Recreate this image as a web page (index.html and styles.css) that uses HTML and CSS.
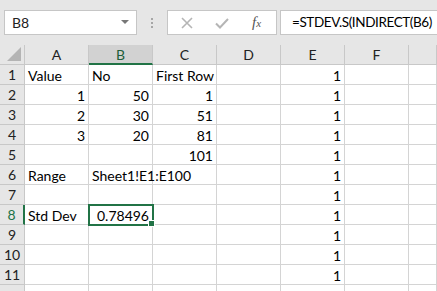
FILE: index.html
```html
<!DOCTYPE html>
<html lang="en">
<head>
    <meta charset="UTF-8">
    <title>Std Dev</title>
    <link rel="stylesheet" href="styles.css">
</head>
<body>
    <div class="toolbar">
        <div class="namebox">
            <span>B8</span>
            <span class="caret"></span>
        </div>
        <div class="grip"><i></i><i></i><i></i></div>
        <div class="buttons">
            <svg class="btn" width="14" height="14" viewBox="0 0 14 14"><path d="M2 2L12 12M12 2L2 12" stroke="#b5b5b5" stroke-width="1.6" fill="none"/></svg>
            <svg class="btn" width="16" height="14" viewBox="0 0 16 14"><path d="M2 7.5L6 11.5L14 3" stroke="#b5b5b5" stroke-width="2" fill="none"/></svg>
            <span class="fx">f<sub>x</sub></span>
        </div>
        <div class="formula">=STDEV.S(INDIRECT(B6)</div>
    </div>

    <div class="sheet">
        <div class="corner"><span class="tri"></span></div>
        <div class="colhead">A</div>
        <div class="colhead active">B</div>
        <div class="colhead">C</div>
        <div class="colhead">D</div>
        <div class="colhead">E</div>
        <div class="colhead">F</div>
        <div class="colhead last"></div>

        <div class="rowhead">1</div>
        <div class="cell">Value</div><div class="cell">No</div><div class="cell">First Row</div><div class="cell"></div><div class="cell num">1</div><div class="cell"></div><div class="cell"></div>

        <div class="rowhead">2</div>
        <div class="cell num">1</div><div class="cell num">50</div><div class="cell num">1</div><div class="cell"></div><div class="cell num">1</div><div class="cell"></div><div class="cell"></div>

        <div class="rowhead">3</div>
        <div class="cell num">2</div><div class="cell num">30</div><div class="cell num">51</div><div class="cell"></div><div class="cell num">1</div><div class="cell"></div><div class="cell"></div>

        <div class="rowhead">4</div>
        <div class="cell num">3</div><div class="cell num">20</div><div class="cell num">81</div><div class="cell"></div><div class="cell num">1</div><div class="cell"></div><div class="cell"></div>

        <div class="rowhead">5</div>
        <div class="cell"></div><div class="cell"></div><div class="cell num">101</div><div class="cell"></div><div class="cell num">1</div><div class="cell"></div><div class="cell"></div>

        <div class="rowhead">6</div>
        <div class="cell">Range</div><div class="cell spill">Sheet1!E1:E100</div><div class="cell"></div><div class="cell"></div><div class="cell num">1</div><div class="cell"></div><div class="cell"></div>

        <div class="rowhead">7</div>
        <div class="cell"></div><div class="cell"></div><div class="cell"></div><div class="cell"></div><div class="cell num">1</div><div class="cell"></div><div class="cell"></div>

        <div class="rowhead active">8</div>
        <div class="cell">Std Dev</div><div class="cell num selected">0.78496<span class="handle"></span></div><div class="cell"></div><div class="cell"></div><div class="cell num">1</div><div class="cell"></div><div class="cell"></div>

        <div class="rowhead">9</div>
        <div class="cell"></div><div class="cell"></div><div class="cell"></div><div class="cell"></div><div class="cell num">1</div><div class="cell"></div><div class="cell"></div>

        <div class="rowhead">10</div>
        <div class="cell"></div><div class="cell"></div><div class="cell"></div><div class="cell"></div><div class="cell num">1</div><div class="cell"></div><div class="cell"></div>

        <div class="rowhead">11</div>
        <div class="cell"></div><div class="cell"></div><div class="cell"></div><div class="cell"></div><div class="cell num">1</div><div class="cell"></div><div class="cell"></div>

        <div class="rowhead"></div>
        <div class="cell"></div><div class="cell"></div><div class="cell"></div><div class="cell"></div><div class="cell"></div><div class="cell"></div><div class="cell"></div>
    </div>
</body>
</html>
```

FILE: styles.css
```css
body {
    margin: 0;
    background: #e6e6e6;
    font-family: Lato, "Liberation Sans", sans-serif;
    color: #000;
    overflow: hidden;
}
.toolbar {
    display: flex;
    align-items: center;
    height: 25px;
    padding: 10px 0 10px 4px;
}
.namebox {
    box-sizing: border-box;
    width: 133px;
    height: 25px;
    background: #fff;
    border: 1px solid #c6c6c6;
    display: flex;
    align-items: center;
    justify-content: space-between;
    padding: 0 7px 0 7px;
    font-size: 14px;
    color: #222;
}
.caret {
    width: 0;
    height: 0;
    border-left: 4px solid transparent;
    border-right: 4px solid transparent;
    border-top: 4px solid #777;
    margin-bottom: 2px;
}
.grip {
    width: 30px;
    display: flex;
    flex-direction: column;
    align-items: center;
    gap: 2px;
}
.grip i {
    width: 2px;
    height: 2px;
    background: #a6a6a6;
}
.buttons {
    box-sizing: border-box;
    width: 110px;
    height: 25px;
    background: #fff;
    border: 1px solid #c6c6c6;
    display: flex;
    align-items: center;
    padding-left: 12px;
    gap: 20px;
}
.fx {
    font-family: "Liberation Serif", serif;
    font-style: italic;
    font-size: 15px;
    color: #555;
    margin-left: 2px;
}
.fx sub {
    font-size: 11px;
    vertical-align: 0;
}
.formula {
    box-sizing: border-box;
    flex: 1;
    min-width: 0;
    height: 25px;
    margin-left: 3px;
    background: #fff;
    border: 1px solid #c6c6c6;
    border-right: none;
    padding-left: 11px;
    font-size: 13.5px;
    letter-spacing: -0.4px;
    line-height: 23px;
    white-space: nowrap;
    overflow: hidden;
}
.sheet {
    display: grid;
    grid-template-columns: 25px repeat(6, 64px) 1fr;
    grid-auto-rows: 20px;
    background: #fff;
    font-size: 14px;
}
.sheet > div {
    box-sizing: border-box;
    border-right: 1px solid #d4d4d4;
    border-bottom: 1px solid #d4d4d4;
    white-space: nowrap;
}
.sheet > .corner,
.sheet > .colhead,
.sheet > .rowhead {
    background: #e6e6e6;
    border-color: #c8c8c8;
    color: #222;
}
.corner {
    position: relative;
}
.tri {
    position: absolute;
    right: 3px;
    bottom: 3px;
    width: 0;
    height: 0;
    border-left: 14px solid transparent;
    border-bottom: 14px solid #b4b4b4;
}
.colhead {
    text-align: center;
    line-height: 19px;
}
.sheet > .colhead.active {
    background: #d2d2d2;
    border-bottom: 2px solid #217346;
    color: #1e5e3a;
}
.rowhead {
    text-align: center;
    line-height: 20px;
}
.sheet > .rowhead.active {
    border-right: 2px solid #217346;
    color: #217346;
}
.cell {
    padding: 0 3px;
    line-height: 21px;
}
.num {
    text-align: right;
}
.spill {
    overflow: visible;
    position: relative;
    z-index: 1;
}
.sheet > .selected {
    position: relative;
    outline: 2px solid #217346;
    outline-offset: -1px;
    z-index: 2;
}
.handle {
    position: absolute;
    right: -3px;
    bottom: -3px;
    width: 5px;
    height: 5px;
    background: #217346;
    border: 1px solid #fff;
}
```
